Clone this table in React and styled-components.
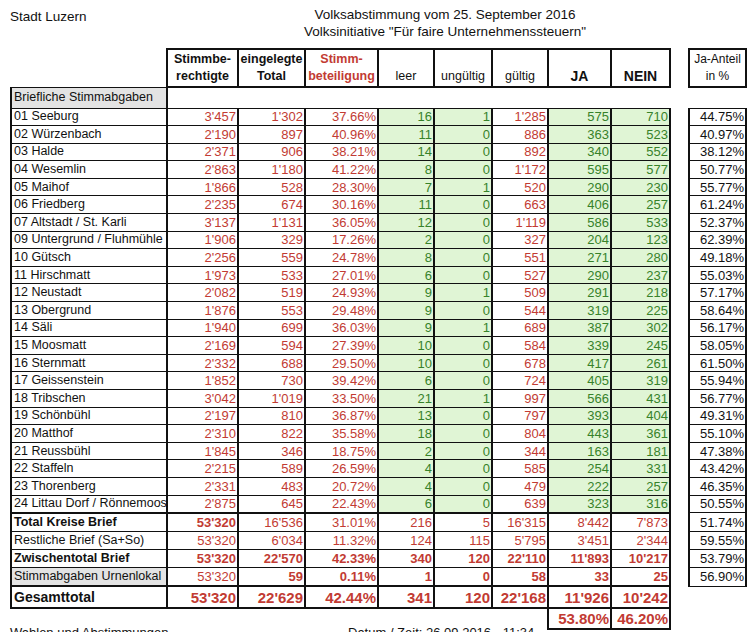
import React from "react";
import styled, { createGlobalStyle } from "styled-components";

const GlobalStyle = createGlobalStyle`
  body {
    margin: 0;
    background: #fff;
    font-family: "Liberation Sans", Arial, sans-serif;
    color: #111;
  }
`;

const RED = "#c23b33";
const GREEN = "#37822a";
const GREEN_BG = "#e0f5d5";
const GRAY_BG = "#e3e3e3";
const LINE = "#111";

const tones = { red: RED, green: GREEN, black: "#111" };

const Page = styled.div`
  padding: 6px 0 0 10px;
  width: 735px;
`;

const TopBar = styled.div`
  display: grid;
  grid-template-columns: 262px 346px;
  height: 42px;
  font-size: 13.5px;
  line-height: 17px;
`;

const City = styled.div`
  padding-top: 2px;
`;

const Title = styled.div`
  text-align: center;
`;

const Sheet = styled.table`
  border-collapse: collapse;
  table-layout: fixed;
  width: 735px;
`;

const Col = styled.col`
  width: ${(p) => p.$w}px;
`;

const Row = styled.tr`
  height: ${(p) => p.$h}px;
`;

const HeadCell = styled.th`
  border: 2px solid ${LINE};
  padding: 0 0 1px;
  text-align: center;
  vertical-align: middle;
  font-size: ${(p) => (p.$big ? "14px" : p.$small ? "12px" : "12.5px")};
  font-weight: ${(p) => (p.$bold ? 700 : 400)};
  color: ${(p) => tones[p.$tone || "black"]};
  line-height: 17px;
  white-space: nowrap;
`;

const Cell = styled.td`
  border-top: ${(p) => (p.$thickTop ? 2 : 1)}px solid ${LINE};
  border-bottom: ${(p) => (p.$thickBottom ? 2 : 1)}px solid ${LINE};
  border-left: 2px solid ${LINE};
  border-right: 2px solid ${LINE};
  padding: 0 1px 0 2px;
  text-align: ${(p) => (p.$left ? "left" : "right")};
  color: ${(p) => tones[p.$tone || "black"]};
  background: ${(p) =>
    p.$tone === "green" ? GREEN_BG : p.$gray ? GRAY_BG : "#fff"};
  font-size: ${(p) => (p.$big ? (p.$left ? "14px" : "15px") : p.$left ? "12.5px" : "13px")};
  font-weight: ${(p) => (p.$bold ? 700 : 400)};
  line-height: 15px;
  white-space: nowrap;
  overflow: hidden;
`;

const Blank = styled.td`
  border: none;
  padding: 0;
`;

const Footer = styled.div`
  display: grid;
  grid-template-columns: 338px auto;
  margin-top: -4px;
  font-size: 13px;
  line-height: 14px;
`;

const widths = [156, 71, 67, 73, 56, 58, 56, 63, 59, 19, 57];

// tone per value column: stimmberechtigte .. nein
const colTones = ["red", "red", "red", "green", "green", "red", "green", "green"];

const districts = [
  ["01 Seeburg", "3'457", "1'302", "37.66%", "16", "1", "1'285", "575", "710", "44.75%"],
  ["02 Würzenbach", "2'190", "897", "40.96%", "11", "0", "886", "363", "523", "40.97%"],
  ["03 Halde", "2'371", "906", "38.21%", "14", "0", "892", "340", "552", "38.12%"],
  ["04 Wesemlin", "2'863", "1'180", "41.22%", "8", "0", "1'172", "595", "577", "50.77%"],
  ["05 Maihof", "1'866", "528", "28.30%", "7", "1", "520", "290", "230", "55.77%"],
  ["06 Friedberg", "2'235", "674", "30.16%", "11", "0", "663", "406", "257", "61.24%"],
  ["07 Altstadt / St. Karli", "3'137", "1'131", "36.05%", "12", "0", "1'119", "586", "533", "52.37%"],
  ["09 Untergrund / Fluhmühle", "1'906", "329", "17.26%", "2", "0", "327", "204", "123", "62.39%"],
  ["10 Gütsch", "2'256", "559", "24.78%", "8", "0", "551", "271", "280", "49.18%"],
  ["11 Hirschmatt", "1'973", "533", "27.01%", "6", "0", "527", "290", "237", "55.03%"],
  ["12 Neustadt", "2'082", "519", "24.93%", "9", "1", "509", "291", "218", "57.17%"],
  ["13 Obergrund", "1'876", "553", "29.48%", "9", "0", "544", "319", "225", "58.64%"],
  ["14 Säli", "1'940", "699", "36.03%", "9", "1", "689", "387", "302", "56.17%"],
  ["15 Moosmatt", "2'169", "594", "27.39%", "10", "0", "584", "339", "245", "58.05%"],
  ["16 Sternmatt", "2'332", "688", "29.50%", "10", "0", "678", "417", "261", "61.50%"],
  ["17 Geissenstein", "1'852", "730", "39.42%", "6", "0", "724", "405", "319", "55.94%"],
  ["18 Tribschen", "3'042", "1'019", "33.50%", "21", "1", "997", "566", "431", "56.77%"],
  ["19 Schönbühl", "2'197", "810", "36.87%", "13", "0", "797", "393", "404", "49.31%"],
  ["20 Matthof", "2'310", "822", "35.58%", "18", "0", "804", "443", "361", "55.10%"],
  ["21 Reussbühl", "1'845", "346", "18.75%", "2", "0", "344", "163", "181", "47.38%"],
  ["22 Staffeln", "2'215", "589", "26.59%", "4", "0", "585", "254", "331", "43.42%"],
  ["23 Thorenberg", "2'331", "483", "20.72%", "4", "0", "479", "222", "257", "46.35%"],
  ["24 Littau Dorf / Rönnemoos", "2'875", "645", "22.43%", "6", "0", "639", "323", "316", "50.55%"],
];

// bold: which value columns are bold (index 0..7)
const totals = [
  {
    name: "Total Kreise Brief", nameBold: true, h: 19, thickTop: true,
    values: ["53'320", "16'536", "31.01%", "216", "5", "16'315", "8'442", "7'873"],
    bold: [0], share: "51.74%",
  },
  {
    name: "Restliche Brief (Sa+So)", h: 17.5,
    values: ["53'320", "6'034", "11.32%", "124", "115", "5'795", "3'451", "2'344"],
    bold: [], share: "59.55%",
  },
  {
    name: "Zwischentotal Brief", nameBold: true, h: 18.5,
    values: ["53'320", "22'570", "42.33%", "340", "120", "22'110", "11'893", "10'217"],
    bold: [0, 1, 2, 3, 4, 5, 6, 7], share: "53.79%",
  },
  {
    name: "Stimmabgaben Urnenlokal", gray: true, h: 18.5,
    values: ["53'320", "59", "0.11%", "1", "0", "58", "33", "25"],
    bold: [1, 2, 3, 4, 5, 6, 7], share: "56.90%",
  },
];

const grand = ["53'320", "22'629", "42.44%", "341", "120", "22'168", "11'926", "10'242"];

function DistrictRow({ data }) {
  const [name, ...rest] = data;
  const values = rest.slice(0, 8);
  return (
    <Row $h={17.6}>
      <Cell $left>{name}</Cell>
      {values.map((v, i) => (
        <Cell key={i} $tone={colTones[i]}>{v}</Cell>
      ))}
      <Blank />
      <Cell>{rest[8]}</Cell>
    </Row>
  );
}

function TotalRow({ row }) {
  return (
    <Row $h={row.h}>
      <Cell $left $bold={row.nameBold} $gray={row.gray} $thickTop={row.thickTop}>
        {row.name}
      </Cell>
      {row.values.map((v, i) => (
        <Cell key={i} $tone="red" $bold={row.bold.includes(i)} $thickTop={row.thickTop}>
          {v}
        </Cell>
      ))}
      <Blank />
      <Cell>{row.share}</Cell>
    </Row>
  );
}

export default function App() {
  return (
    <Page>
      <GlobalStyle />
      <TopBar>
        <City>Stadt Luzern</City>
        <Title>
          <div>Volksabstimmung vom 25. September 2016</div>
          <div>Volksinitiative "Für faire Unternehmenssteuern"</div>
        </Title>
      </TopBar>

      <Sheet>
        <colgroup>
          {widths.map((w, i) => (
            <Col key={i} $w={w} />
          ))}
        </colgroup>
        <tbody>
          <Row $h={38}>
            <Blank />
            <HeadCell $bold><div>Stimmbe-</div><div>rechtigte</div></HeadCell>
            <HeadCell $bold><div>eingelegte</div><div>Total</div></HeadCell>
            <HeadCell $bold $tone="red"><div>Stimm-</div><div>beteiligung</div></HeadCell>
            <HeadCell><div>&nbsp;</div><div>leer</div></HeadCell>
            <HeadCell><div>&nbsp;</div><div>ungültig</div></HeadCell>
            <HeadCell><div>&nbsp;</div><div>gültig</div></HeadCell>
            <HeadCell $bold $big><div>&nbsp;</div><div>JA</div></HeadCell>
            <HeadCell $bold $big><div>&nbsp;</div><div>NEIN</div></HeadCell>
            <Blank />
            <HeadCell $small><div>Ja-Anteil</div><div>in %</div></HeadCell>
          </Row>

          <Row $h={21}>
            <Cell $left $gray>Briefliche Stimmabgaben</Cell>
            {widths.slice(1).map((_, i) => (
              <Blank key={i} />
            ))}
          </Row>

          {districts.map((d) => (
            <DistrictRow key={d[0]} data={d} />
          ))}

          {totals.map((t) => (
            <TotalRow key={t.name} row={t} />
          ))}

          <Row $h={22}>
            <Cell $left $bold $big $thickTop $thickBottom>Gesamttotal</Cell>
            {grand.map((v, i) => (
              <Cell key={i} $tone="red" $bold $big $thickTop $thickBottom>{v}</Cell>
            ))}
            <Blank />
            <Blank />
          </Row>

          <Row $h={21}>
            {widths.slice(0, 7).map((_, i) => (
              <Blank key={i} />
            ))}
            <Cell $tone="red" $bold $big $thickBottom>53.80%</Cell>
            <Cell $tone="red" $bold $big $thickBottom>46.20%</Cell>
            <Blank />
            <Blank />
          </Row>
        </tbody>
      </Sheet>

      <Footer>
        <div>Wahlen und Abstimmungen</div>
        <div>Datum / Zeit: 26.09.2016 - 11:34</div>
      </Footer>
    </Page>
  );
}
